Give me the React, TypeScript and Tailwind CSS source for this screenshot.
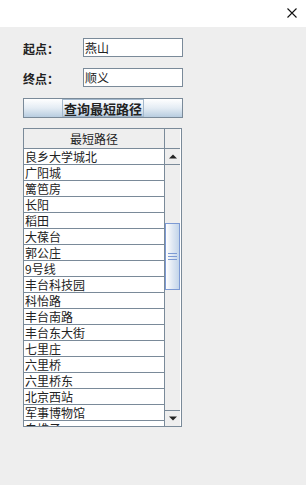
import React from "react";

const stations = [
  "良乡大学城北",
  "广阳城",
  "篱笆房",
  "长阳",
  "稻田",
  "大葆台",
  "郭公庄",
  "9号线",
  "丰台科技园",
  "科怡路",
  "丰台南路",
  "丰台东大街",
  "七里庄",
  "六里桥",
  "六里桥东",
  "北京西站",
  "军事博物馆",
  "白堆子",
];

const font = { fontFamily: '"Noto Sans CJK SC", "Noto Sans", sans-serif' };

export default function App() {
  return (
    <div
      className="w-[306px] h-[485px] bg-[#eeeeee] flex flex-col text-[#222222] overflow-hidden"
      style={font}
    >
      {/* Title bar */}
      <div className="h-[27px] bg-white flex items-center justify-end pr-[9px] shrink-0">
        <svg width="10" height="10" viewBox="0 0 10 10" className="mt-[-2px]">
          <path d="M0.5 0.5 L9.5 9.5 M9.5 0.5 L0.5 9.5" stroke="#111" strokeWidth="1.1" fill="none" />
        </svg>
      </div>

      <div className="pl-[23px] pt-[11px] flex flex-col">
        {/* Row 1 */}
        <div className="flex items-center h-[19px]">
          <span className="w-[60px] text-[12px] font-bold leading-none pt-[3px]">起点：</span>
          <div className="w-[100px] h-[19px] bg-white border border-[#7a8a99] flex items-center pl-[1px] text-[12px] leading-none">
            燕山
          </div>
        </div>
        {/* Row 2 */}
        <div className="flex items-center h-[19px] mt-[11px]">
          <span className="w-[60px] text-[12px] font-bold leading-none pt-[3px]">终点：</span>
          <div className="w-[100px] h-[19px] bg-white border border-[#7a8a99] flex items-center pl-[1px] text-[12px] leading-none">
            顺义
          </div>
        </div>
        {/* Button */}
        <div className="mt-[11px] w-[160px] h-[20px] border border-[#7a8a99] bg-gradient-to-b from-[#ffffff] via-[#e4ecf4] to-[#b8cde0] flex items-center justify-center">
          <span className="border border-[#a3b8cc] h-[18px] px-[1px] flex items-center text-[13px] font-bold leading-none">
            查询最短路径
          </span>
        </div>

        {/* Table */}
        <div className="mt-[10px] w-[159px] h-[299px] border border-[#7a8a99] flex bg-white">
          {/* Left column */}
          <div className="w-[141px] flex flex-col overflow-hidden border-r border-[#7a8a99]">
            <div className="h-[20px] shrink-0 bg-[#eeeeee] border-b border-[#7a8a99] flex items-center justify-center text-[12px] leading-none">
              最短路径
            </div>
            <div className="flex-1 overflow-hidden">
              {stations.map((s) => (
                <div
                  key={s}
                  className="h-[16px] border-b border-[#7a8a99] flex items-center pl-[1px] text-[12px] leading-none bg-white"
                >
                  {s}
                </div>
              ))}
            </div>
          </div>
          {/* Scrollbar column */}
          <div className="w-[15px] flex flex-col bg-[#eeeeee]">
            <div className="h-[20px] shrink-0 border-b border-[#7a8a99]" />
            <div className="h-[16px] shrink-0 border-b border-[#7a8a99] flex items-center justify-center">
              <svg width="8" height="5" viewBox="0 0 8 5">
                <path d="M0 4.5 L4 0.5 L8 4.5 Z" fill="#222" />
              </svg>
            </div>
            <div className="flex-1 flex flex-col">
              <div className="h-[58px] shrink-0" />
              <div className="h-[67px] shrink-0 border border-[#7c9ad4] bg-gradient-to-r from-[#ffffff] via-[#dfe8f3] to-[#c3d5ea] flex flex-col items-center justify-center gap-[2px]">
                <div className="w-[9px] h-[1px] bg-[#7c9ad4]" />
                <div className="w-[9px] h-[1px] bg-[#7c9ad4]" />
                <div className="w-[9px] h-[1px] bg-[#7c9ad4]" />
              </div>
            </div>
            <div className="h-[16px] shrink-0 border-t border-[#7a8a99] flex items-center justify-center">
              <svg width="8" height="5" viewBox="0 0 8 5">
                <path d="M0 0.5 L4 4.5 L8 0.5 Z" fill="#222" />
              </svg>
            </div>
          </div>
        </div>
      </div>
    </div>
  );
}
